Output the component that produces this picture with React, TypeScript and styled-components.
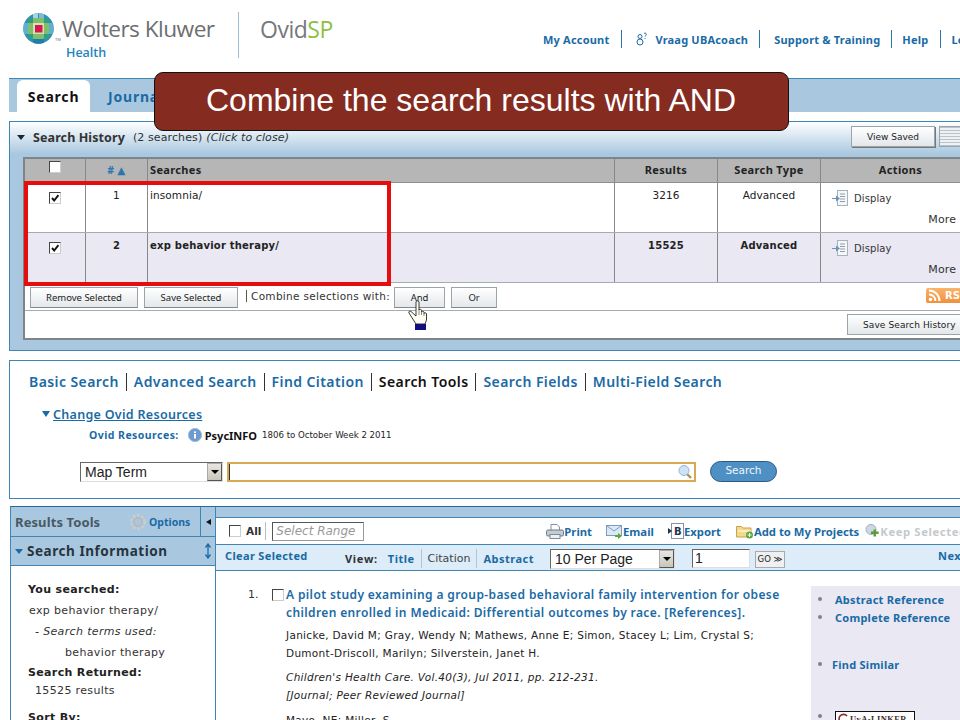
import React from 'react';
import styled, { createGlobalStyle } from 'styled-components';

const boldFont = `"Noto Sans", "DejaVu Sans", sans-serif`;

const Global = createGlobalStyle`
  html, body { margin: 0; padding: 0; background: #fff; }
  body { width: 960px; height: 720px; overflow: hidden; font-family: "DejaVu Sans", Verdana, sans-serif; color: #222; }
  * { box-sizing: border-box; }
`;

const Frame = styled.div`
  position: relative;
  width: 960px;
  height: 720px;
  overflow: hidden;
  background: #fff;
`;
const Canvas = styled.div`
  width: 1060px;
  padding-left: 9px;
`;

const Header = styled.header`
  height: 78px;
  margin-left: -9px;
  display: flex;
  align-items: flex-start;
`;
const Brand = styled.div`
  width: 238px;
  padding: 13px 0 0 23px;
  height: 62px;
`;
const BrandTop = styled.div`
  display: flex;
  align-items: center;
`;
const TradeMark = styled.span`
  font: 4px "Liberation Sans", sans-serif;
  color: #6d6e71;
  align-self: flex-end;
  margin: 0 1px 2px 1px;
  width: 6px;
`;
const BrandName = styled.span`
  font-family: "Open Sans", "Liberation Sans", sans-serif;
  font-size: 22.7px;
  letter-spacing: -0.55px;
  color: #6d6e71;
  line-height: 30px;
`;
const BrandSub = styled.div`
  font-family: "Open Sans", sans-serif;
  font-size: 12.5px;
  font-weight: 600;
  color: #1f84bd;
  margin: 1px 0 0 43px;
  line-height: 16px;
`;
const BrandRule = styled.div`
  width: 1px;
  height: 46px;
  margin-top: 12px;
  background: #9dbcd2;
`;
const Product = styled.div`
  font-family: "Open Sans", sans-serif;
  font-size: 23px;
  letter-spacing: -0.5px;
  color: #77787b;
  margin: 12px 0 0 21px;
  line-height: 34px;
  width: 283px;
`;
const ProductAccent = styled.span`
  color: #8dbf3f;
`;
const TopNav = styled.nav`
  display: flex;
  align-items: center;
  height: 18px;
  margin-top: 30px;
  white-space: nowrap;
`;
const TopLink = styled.a<{ $l: number; $r: number }>`
  font-family: ${boldFont};
  font-size: 11px;
  font-weight: 700;
  letter-spacing: 0.2px;
  color: #1a6aa5;
  padding: 0 ${p => p.$r}px 0 ${p => p.$l}px;
  display: flex;
  align-items: center;
  gap: 7px;
  height: 18px;
  & + & { border-left: 1px solid #2b76ad; }
`;

const TabStrip = styled.div`
  height: 34px;
  border-top: 1px solid #3f85b5;
  background: #a9c8e0;
  display: flex;
  align-items: flex-end;
  padding-left: 8px;
`;
const Tab = styled.div<{ $active?: boolean }>`
  height: 32px;
  width: ${p => (p.$active ? 73 : 90)}px;
  border-radius: 6px 6px 0 0;
  background: ${p => (p.$active ? '#fff' : 'transparent')};
  color: ${p => (p.$active ? '#111' : '#1a6aa5')};
  font-family: ${boldFont};
  font-size: 14px;
  font-weight: 700;
  letter-spacing: 0.8px;
  display: flex;
  align-items: center;
  justify-content: ${p => (p.$active ? 'center' : 'flex-start')};
  padding: ${p => (p.$active ? '0' : '0 0 0 18px')};
`;

const HistoryPanel = styled.section`
  margin-top: 9px;
  height: 230px;
  border: 1px solid #3f85b5;
  border-width: 1px 0 1px 1px;
  background: linear-gradient(#fff 0, #a9c8e0 32px);
`;
const HistoryTitle = styled.div`
  height: 35px;
  display: flex;
  align-items: center;
  font-size: 12px;
  color: #333;
  width: 970px;
  padding: 0 0 5px 7px;
`;
const Caret = styled.span<{ $gap: number; $color: string }>`
  width: 0;
  height: 0;
  border: 4px solid transparent;
  border-top: 5px solid ${p => p.$color};
  border-bottom: 0;
  margin-right: ${p => p.$gap}px;
`;
const HistoryName = styled.strong`
  font-family: ${boldFont};
  font-weight: 700;
  font-size: 12.5px;
  letter-spacing: 0.1px;
  margin-right: 8px;
`;
const Muted = styled.span`
  font-size: 11px;
  letter-spacing: 0.1px;
`;
const Slanted = styled.span`
  font-size: 11px;
  font-style: italic;
  letter-spacing: 0.1px;
  margin-left: 4px;
`;
const ViewSaved = styled.button`
  margin-left: auto;
  align-self: flex-start;
  margin-top: 4px;
  width: 84px;
  height: 21px;
  margin-right: 4px;
  border: 1px solid #9aa4aa;
  background: linear-gradient(#fff, #e2e7ea);
  box-shadow: 1px 1px 0 #777;
  font: 9px "DejaVu Sans", sans-serif;
  color: #222;
  padding: 0;
`;
const ListIcon = styled.span`
  width: 41px;
  height: 21px;
  flex: none;
  align-self: flex-start;
  margin-top: 4px;
  border: 1px solid #9aa4aa;
  background: repeating-linear-gradient(#b8c2c9 0 1px, #eef2f4 1px 3px);
`;

const HistoryBox = styled.div`
  margin-left: 13px;
  border: 1px solid #7d8589;
  border-width: 2px 0 2px 2px;
  background: #fff;
  height: 183px;
`;
const columns = '60px 62px 467px 103px 103px 160px';
const HeadRow = styled.div`
  display: grid;
  grid-template-columns: ${columns};
  height: 24px;
  background: #b6b6b6;
  border-bottom: 1px solid #8b9094;
`;
const HeadCell = styled.div<{ $left?: boolean }>`
  font-family: ${boldFont};
  font-size: 11px;
  font-weight: 700;
  color: #222;
  display: flex;
  align-items: center;
  justify-content: ${p => (p.$left ? 'flex-start' : 'center')};
  padding: 0 0 2px ${p => (p.$left ? '2px' : '0')};
  letter-spacing: 0.35px;
  border-left: 1px solid #85898c;
  &:first-child { border-left: 0; }
`;
const SortLabel = styled.span`
  color: #2a77ad;
  font-size: 10.5px;
  display: flex;
  gap: 3px;
`;
const Row = styled.div<{ $shade?: boolean }>`
  display: grid;
  grid-template-columns: ${columns};
  height: 50px;
  background: ${p => (p.$shade ? '#e9e8f3' : '#fff')};
  border-bottom: 1px solid #a7abae;
`;
const Cell = styled.div<{ $left?: boolean; $bold?: boolean }>`
  font-size: ${p => (p.$bold ? 10 : 10.5)}px;
  font-weight: ${p => (p.$bold ? 700 : 400)};
  letter-spacing: ${p => (p.$bold ? 0.22 : 0.1)}px;
  color: #222;
  text-align: ${p => (p.$left ? 'left' : 'center')};
  padding: ${p => (p.$bold ? 7 : 6)}px ${p => (p.$left ? '2px' : '0')} 0;
  border-left: 1px solid #85898c;
  &:first-child { border-left: 0; }
`;
const ActionCell = styled.div`
  border-left: 1px solid #85898c;
  font-size: 10px;
  letter-spacing: 0.1px;
  color: #333;
  padding: 7px 0 0 11px;
`;
const DisplayLine = styled.div`
  display: flex;
  align-items: center;
  gap: 6px;
`;
const MoreLine = styled.div`
  text-align: right;
  width: 124px;
  margin-top: 7px;
  line-height: 13px;
  font-size: 11px;
`;
const CheckBox = styled.span<{ $top?: number }>`
  display: inline-block;
  width: 12px;
  height: 12px;
  border: 1px solid #444;
  border-right-color: #ccc;
  border-bottom-color: #ccc;
  background: #fff;
  position: relative;
  margin-top: ${p => p.$top ?? 0}px;
  vertical-align: top;
  flex: none;
`;
const Tick = styled.svg`
  position: absolute;
  left: 0;
  top: 0;
  width: 10px;
  height: 10px;
`;
const CheckCell = styled.div`
  text-align: center;
  padding-top: 9px;
`;
const Toolbar = styled.div`
  height: 28px;
  display: flex;
  align-items: center;
  padding: 1px 0 0 5px;
  border-bottom: 1px solid #a7abae;
  position: relative;
`;
const ToolButton = styled.button<{ $w: number; $gap?: number }>`
  width: ${p => p.$w}px;
  margin-right: ${p => p.$gap ?? 6}px;
  height: 21px;
  border: 1px solid #9aa4aa;
  border-bottom-color: #7f898f;
  background: linear-gradient(#fff, #e4e8ea);
  font: 9.5px "Noto Sans", "DejaVu Sans", sans-serif;
  color: #222;
  padding: 0;
`;
const CombineText = styled.span`
  font-size: 10.5px;
  letter-spacing: 0.3px;
  color: #333;
  margin-left: 2px;
  border-left: 1px solid #555;
  padding-left: 4px;
  margin-right: 4px;
  line-height: 12px;
  white-space: nowrap;
  position: relative;
  top: -1px;
`;
const Rss = styled.span`
  position: absolute;
  left: 901px;
  top: 5px;
  width: 60px;
  height: 15px;
  background: linear-gradient(#fbb36a, #f0903a);
  border-radius: 2px;
  display: flex;
  align-items: center;
  gap: 4px;
  padding-left: 2px;
  color: #fff;
  font-size: 10px;
  font-weight: 700;
`;
const SaveRow = styled.div`
  height: 27px;
  display: flex;
  justify-content: flex-end;
  align-items: center;
  width: 942px;
`;
const SaveButton = styled.button`
  width: 120px;
  height: 21px;
  border: 1px solid #9aa4aa;
  background: linear-gradient(#fff, #e2e7ea);
  font: 9px "DejaVu Sans", sans-serif;
  letter-spacing: 0.1px;
  color: #222;
  padding: 0 0 0 15px;
  text-align: left;
  white-space: nowrap;
`;

const SearchPanel = styled.section`
  margin-top: 9px;
  height: 139px;
  border: 1px solid #3f85b5;
  border-right: 0;
  padding: 11px 0 0 19px;
`;
const ModeNav = styled.nav`
  display: flex;
  align-items: center;
  height: 20px;
`;
const ModeLink = styled.a<{ $active?: boolean }>`
  font-family: ${boldFont};
  font-size: 14px;
  font-weight: 600;
  letter-spacing: 0.42px;
  color: ${p => (p.$active ? '#111' : '#1a6aa5')};
  padding: 0 7px;
  line-height: 18px;
  &:first-child { padding-left: 0; }
  & + & { border-left: 1px solid #333; }
`;
const ChangeLine = styled.div`
  display: flex;
  align-items: center;
  height: 16px;
  margin: 14px 0 0 13px;
`;
const SmallCaret = styled.span`
  width: 0;
  height: 0;
  border: 4px solid transparent;
  border-top: 6px solid #1a6aa5;
  border-bottom: 0;
  margin-right: 3px;
`;
const ChangeLink = styled.a`
  font-family: ${boldFont};
  font-size: 12.5px;
  font-weight: 600;
  letter-spacing: 0.3px;
  color: #1a6aa5;
  text-decoration: underline;
`;
const ResourceLine = styled.div`
  display: flex;
  align-items: center;
  height: 18px;
  margin: 4px 0 0 60px;
`;
const ResourceLabel = styled.span`
  font-family: ${boldFont};
  font-size: 10.5px;
  font-weight: 700;
  letter-spacing: 0.45px;
  color: #1a6aa5;
  margin-right: 9px;
`;
const ResourceName = styled.strong`
  font-family: ${boldFont};
  font-size: 11px;
  font-weight: 700;
  color: #111;
  margin: 0 5px 0 3px;
`;
const ResourceDate = styled.span`
  font-size: 8.6px;
  color: #222;
`;
const SearchLine = styled.div`
  display: flex;
  align-items: center;
  height: 22px;
  margin: 17px 0 0 51px;
`;
const FakeSelect = styled.div<{ $w: number; $gap?: number }>`
  width: ${p => p.$w}px;
  height: 20px;
  margin-left: ${p => p.$gap ?? 0}px;
  border: 1px solid #666;
  border-right-color: #ddd;
  border-bottom-color: #ddd;
  display: flex;
  align-items: center;
  justify-content: space-between;
  background: #fff;
  font: 14px "Liberation Sans", sans-serif;
  padding-left: 4px;
  color: #222;
  flex: none;
`;
const SelectArrow = styled.span`
  width: 15px;
  height: 18px;
  background: linear-gradient(#e8e6e0, #c8c5bc);
  border: 1px solid #aaa;
  border-right-color: #555;
  border-bottom-color: #555;
  display: flex;
  align-items: center;
  justify-content: center;
  &::after {
    content: '';
    border: 4px solid transparent;
    border-top: 4px solid #000;
    border-bottom: 0;
  }
`;
const QueryBox = styled.div`
  width: 469px;
  height: 20px;
  margin-left: 4px;
  border: 2px solid #d8a955;
  background: #fff;
  display: flex;
  align-items: center;
  justify-content: flex-end;
  padding-right: 1px;
  position: relative;
  flex: none;
  &::before {
    content: '';
    position: absolute;
    left: 0;
    top: 0;
    width: 1px;
    height: 16px;
    background: #333;
  }
`;
const SearchButton = styled.button`
  margin: 0 0 1px 14px;
  width: 67px;
  height: 21px;
  border-radius: 11px;
  border: 1px solid #2a5a85;
  background: #4f90c4;
  color: #eef5fb;
  font: 10.5px "DejaVu Sans", sans-serif;
  padding: 0 0 3px;
`;

const ResultsPanel = styled.section`
  margin-top: 7px;
  margin-left: 1px;
  display: grid;
  grid-template-columns: 205px 1fr;
  height: 220px;
  border-top: 1px solid #1f6aa0;
  border-left: 1px solid #3f85b5;
`;
const SideBar = styled.aside`
  border-right: 1px solid #3f85b5;
`;
const SideHead = styled.div`
  height: 30px;
  background: #a9c8e0;
  border-bottom: 1px solid #3f85b5;
  display: flex;
  align-items: center;
  padding-left: 4px;
`;
const SideTitle = styled.span`
  font-family: ${boldFont};
  font-size: 13px;
  font-weight: 700;
  color: #4a5963;
  letter-spacing: 0.1px;
  width: 113px;
`;
const SideOptions = styled.span`
  font-family: ${boldFont};
  font-size: 10.5px;
  font-weight: 700;
  color: #1a6aa5;
  display: flex;
  align-items: center;
  gap: 1px;
  width: 72px;
`;
const CollapseTab = styled.span`
  height: 29px;
  flex: 1;
  border-left: 1px solid #3f85b5;
  display: flex;
  align-items: center;
  justify-content: center;
  &::after {
    content: '';
    border: 3px solid transparent;
    border-right: 5px solid #111;
    border-left: 0;
  }
`;
const InfoHead = styled.div`
  height: 29px;
  background: #a9c8e0;
  border-bottom: 1px solid #3f85b5;
  display: flex;
  align-items: center;
  padding-left: 4px;
  font-family: ${boldFont};
  font-size: 13.5px;
  font-weight: 700;
  color: #26343e;
  letter-spacing: 0.55px;
`;
const ResizeMark = styled.svg`
  margin-left: auto;
  margin-right: 3px;
`;
const SideBody = styled.div`
  padding: 17px 0 0 17px;
`;
const SideLabel = styled.div<{ $top?: number }>`
  font-size: 11px;
  font-weight: 700;
  letter-spacing: 0.35px;
  color: #222;
  line-height: 14px;
  margin-top: ${p => p.$top ?? 0}px;
`;
const SideText = styled.div<{ $indent?: number; $italic?: boolean; $top?: number }>`
  font-size: 11px;
  letter-spacing: 0.35px;
  color: #333;
  line-height: 14px;
  font-style: ${p => (p.$italic ? 'italic' : 'normal')};
  margin-top: ${p => p.$top ?? 7}px;
  padding-left: ${p => p.$indent ?? 0}px;
`;

const Main = styled.div``;
const MainBand = styled.div`
  height: 11px;
  background: #a9c8e0;
  border-bottom: 1px solid #3f85b5;
`;
const ActionBar = styled.div`
  height: 26px;
  display: flex;
  align-items: center;
  padding-left: 13px;
  white-space: nowrap;
`;
const AllLabel = styled.span`
  font-size: 10.5px;
  font-weight: 700;
  color: #333;
  margin-left: 5px;
  padding-right: 4px;
  border-right: 1px solid #bbb;
  line-height: 18px;
`;
const RangeBox = styled.span`
  width: 92px;
  height: 19px;
  margin-left: 6px;
  border: 1px solid #999;
  border-top-color: #555;
  border-left-color: #555;
  font: italic 12px "DejaVu Sans", sans-serif;
  color: #999;
  padding-left: 3px;
  line-height: 17px;
  overflow: hidden;
  flex: none;
`;
const ActionLink = styled.a<{ $gap: number; $off?: boolean }>`
  display: flex;
  align-items: center;
  font-family: ${boldFont};
  font-size: 11.3px;
  font-weight: 700;
  letter-spacing: ${p => (p.$off ? '0.6px' : '0')};
  color: ${p => (p.$off ? '#c4c9cc' : '#1a6aa5')};
  margin-left: ${p => p.$gap}px;
`;
const ViewBar = styled.div`
  height: 27px;
  background: #dcecf8;
  border-top: 1px solid #3f85b5;
  border-bottom: 1px solid #3f85b5;
  display: flex;
  align-items: center;
  padding: 2px 0 0 9px;
  white-space: nowrap;
`;
const ClearLink = styled.a`
  font-family: ${boldFont};
  font-size: 11px;
  font-weight: 700;
  letter-spacing: 0.35px;
  color: #1a6aa5;
  width: 120px;
  position: relative;
  top: -3px;
`;
const ViewLabel = styled.span`
  font-family: ${boldFont};
  font-size: 11px;
  font-weight: 700;
  letter-spacing: 0.7px;
  color: #333;
  margin-right: 10px;
`;
const ViewLink = styled.a<{ $plain?: boolean; $last?: boolean }>`
  font-family: ${p => (p.$plain ? `"DejaVu Sans", sans-serif` : boldFont)};
  font-size: 11px;
  font-weight: ${p => (p.$plain ? 400 : 700)};
  letter-spacing: ${p => (p.$plain ? 0 : 0.5)}px;
  color: ${p => (p.$plain ? '#444' : '#1a6aa5')};
  padding-right: 6px;
  margin-right: 6px;
  border-right: ${p => (p.$last ? '0' : '1px solid #b6c4ce')};
  line-height: 19px;
`;
const PageBox = styled.span`
  width: 58px;
  height: 19px;
  margin-left: 17px;
  border: 1px solid #666;
  border-right-color: #ddd;
  border-bottom-color: #ddd;
  background: #fff;
  font: 14px "Liberation Sans", sans-serif;
  padding-left: 2px;
  line-height: 17px;
`;
const GoBox = styled.span`
  width: 30px;
  height: 17px;
  margin: 2px 0 0 5px;
  border: 1px solid #aaa;
  background: #eef0f2;
  font-size: 8.5px;
  line-height: 15px;
  text-align: center;
  color: #222;
`;
const NextLink = styled.a`
  font-family: ${boldFont};
  font-size: 11px;
  font-weight: 700;
  color: #1a6aa5;
  letter-spacing: 0.5px;
  margin-left: 153px;
  position: relative;
  top: -3px;
`;
const ResultBody = styled.div`
  display: flex;
  align-items: flex-start;
`;
const Article = styled.article`
  width: 595px;
  padding: 15px 0 0 32px;
  display: grid;
  grid-template-columns: 24px 14px 1fr;
`;
const ArticleNum = styled.span`
  font-size: 11px;
  color: #333;
  line-height: 18px;
`;
const ArticleCheck = styled.span`
  padding-top: 3px;
`;
const ArticleTitle = styled.a`
  font-family: ${boldFont};
  font-size: 12px;
  font-weight: 600;
  letter-spacing: 0.38px;
  color: #1a6aa5;
  line-height: 18px;
  white-space: nowrap;
`;
const ArticleText = styled.div<{ $italic?: boolean; $top: number }>`
  grid-column: 3;
  font-size: 10.5px;
  letter-spacing: 0.3px;
  color: #222;
  line-height: 18px;
  font-style: ${p => (p.$italic ? 'italic' : 'normal')};
  white-space: nowrap;
  margin-top: ${p => p.$top}px;
`;
const LinkCard = styled.ul`
  list-style: none;
  margin: 15px 0 0 0;
  padding: 4px 0 0 7px;
  width: 200px;
  height: 150px;
  background: #e9e8f3;
`;
const LinkItem = styled.li<{ $top?: number; $indent?: number }>`
  display: flex;
  align-items: center;
  height: 18px;
  margin-top: ${p => p.$top ?? 0}px;
  font-family: ${boldFont};
  font-size: 11px;
  font-weight: 700;
  letter-spacing: 0.25px;
  color: #1a6aa5;
  &::before {
    content: '';
    width: 4px;
    height: 4px;
    border-radius: 50%;
    background: #7d8489;
    margin-right: ${p => p.$indent ?? 13}px;
  }
`;
const LinkerBadge = styled.span`
  display: flex;
  align-items: center;
  gap: 1px;
  width: 80px;
  height: 16px;
  margin-top: 6px;
  border: 1px solid #111;
  font: 700 8.5px "Liberation Serif", serif;
  letter-spacing: 0.4px;
  background: #fff;
  color: #3b2a2a;
  padding-left: 1px;
`;

const Banner = styled.div`
  position: absolute;
  left: 154px;
  top: 72px;
  width: 635px;
  height: 59px;
  border-radius: 9px;
  border: 1px solid #111;
  background: #852b20;
  color: #fff;
  font: 32px "Liberation Sans", Arial, sans-serif;
  display: flex;
  align-items: center;
  justify-content: center;
  padding: 0 1px 2px 0;
`;
const Highlight = styled.div`
  position: absolute;
  left: 24px;
  top: 181px;
  width: 367px;
  height: 105px;
  border: 4px solid #e60d0d;
`;
const Hand = styled.svg`
  position: absolute;
  left: 407px;
  top: 300px;
`;

const Check = ({ on, top }: { on?: boolean; top?: number }) => (
  <CheckBox $top={top}>
    {on && (
      <Tick viewBox="0 0 10 10">
        <path d="M2 5 L4.2 7.5 L8.4 2.2" fill="none" stroke="#111" strokeWidth="1.9" />
      </Tick>
    )}
  </CheckBox>
);

const Globe = () => (
  <svg width="31" height="31" viewBox="0 0 31 31">
    <defs>
      <clipPath id="globeClip"><circle cx="15.5" cy="15.5" r="15.2" /></clipPath>
    </defs>
    <g clipPath="url(#globeClip)">
      <rect width="31" height="31" fill="#2f8fb6" />
      <rect x="10" y="0" width="5" height="5" fill="#a9d3e3" />
      <rect x="16" y="0" width="5" height="5" fill="#7fbcd4" />
      <rect x="0" y="10" width="5" height="11" fill="#5fb0cd" />
      <rect x="26" y="10" width="5" height="11" fill="#5fb0cd" />
      <rect x="10" y="26" width="11" height="5" fill="#1f7fa8" />
      <rect x="5" y="5" width="21" height="21" fill="#7fbf6a" />
      <rect x="5" y="5" width="5" height="5" fill="#2f9d8c" />
      <rect x="21" y="5" width="5" height="5" fill="#2f9d8c" />
      <rect x="5" y="21" width="5" height="5" fill="#2f9d8c" />
      <rect x="21" y="21" width="5" height="5" fill="#2f9d8c" />
      <rect x="10" y="10" width="11" height="11" fill="#cfe6b4" />
      <rect x="12" y="12" width="7.5" height="7.5" fill="#d8174f" />
    </g>
  </svg>
);

const DisplayIcon = () => (
  <svg width="16" height="16" viewBox="0 0 16 16">
    <rect x="5.5" y="0.5" width="10" height="15" fill="#f4f6f8" stroke="#a5b3bd" />
    <path d="M8 4h5M8 6.5h5M8 9h5M8 11.5h5" stroke="#8fa0ac" />
    <path d="M0 8h4V5.5L8 8.5 4 11.5V9H0z" fill="#6d93b3" />
  </svg>
);

const Coach = () => (
  <svg width="12" height="14" viewBox="0 0 12 14" fill="none" stroke="#1a6aa5" strokeWidth="1">
    <circle cx="4" cy="4.5" r="2" />
    <circle cx="4" cy="10" r="3" />
    <path d="M8 1.5c1-.8 2.5-.3 2.3 1 -.1.8-1.2 1-1.2 2M9 6v.8" />
  </svg>
);

const InfoIcon = () => (
  <svg width="14" height="14" viewBox="0 0 14 14">
    <circle cx="7" cy="7" r="6.6" fill="#6c9bd0" stroke="#9fbbdc" />
    <rect x="6" y="6" width="2" height="4.5" fill="#fff" />
    <rect x="6" y="3.4" width="2" height="1.6" fill="#fff" />
  </svg>
);

const Magnifier = () => (
  <svg width="15" height="16" viewBox="0 0 15 16">
    <path d="M9 10l4 4" stroke="#b89048" strokeWidth="2.4" />
    <circle cx="6" cy="6.5" r="5" fill="#cfe3f5" stroke="#93b4d4" />
  </svg>
);

const Gear = () => (
  <svg width="20" height="20" viewBox="0 0 20 20">
    <circle cx="10" cy="10" r="6" fill="none" stroke="#c8cdd0" strokeWidth="4" strokeDasharray="2.4 1.4" />
    <circle cx="10" cy="10" r="4.2" fill="none" stroke="#b4babe" strokeWidth="2" />
  </svg>
);

const Printer = () => (
  <svg width="18" height="17" viewBox="0 0 18 17">
    <path d="M5 7V1.5h6l2.5 2.5v3" fill="#fff" stroke="#7f93a6" />
    <rect x="0.5" y="7" width="17" height="6" rx="1.5" fill="#c3ccd3" stroke="#6c7a86" />
    <rect x="4" y="11.5" width="10" height="4" fill="#eef1f3" stroke="#7f8c96" />
  </svg>
);
const Mail = () => (
  <svg width="17" height="16" viewBox="0 0 17 16">
    <rect x="0.5" y="2.5" width="15" height="10" fill="#dbe9f6" stroke="#7d9dbe" />
    <path d="M1 3l7 5 7-5" fill="none" stroke="#7d9dbe" />
    <path d="M9 12h3v-2l4 3-4 3v-2H9z" fill="#5aa83c" />
  </svg>
);
const ExportIcon = () => (
  <svg width="16" height="16" viewBox="0 0 16 16">
    <rect x="3.5" y="0.5" width="12" height="15" fill="#fff" stroke="#8a939a" />
    <path d="M0 5l4 3-4 3z" fill="#1d3550" />
    <text x="6" y="12" fontSize="10" fontWeight="700" fontFamily="DejaVu Sans" fill="#1d3550">B</text>
  </svg>
);
const Folder = () => (
  <svg width="18" height="16" viewBox="0 0 18 16">
    <path d="M0.5 3.5h5l1.5 1.5h8v9h-14.5z" fill="#f4d98b" stroke="#c9a24e" />
    <path d="M2 8h13" stroke="#fff" />
    <circle cx="13.5" cy="12" r="3.5" fill="#5aa83c" />
    <path d="M11.5 12h4M13.5 10v4" stroke="#fff" />
  </svg>
);
const KeepIcon = () => (
  <svg width="15" height="16" viewBox="0 0 15 16">
    <circle cx="6" cy="6.5" r="5" fill="#cbd9e4" stroke="#9db0bf" />
    <path d="M6 9h3V6.5h3V9h3v3h-3v3H9v-3H6z" transform="scale(0.85) translate(1 1)" fill="#5f9a3f" />
  </svg>
);
const RssGlyph = () => (
  <svg width="13" height="13" viewBox="0 0 13 13">
    <circle cx="2.5" cy="10.5" r="1.8" fill="#fff" />
    <path d="M1 5.5a6.5 6.5 0 0 1 6.5 6.5M1 1.5a10.5 10.5 0 0 1 10.5 10.5" fill="none" stroke="#fff" strokeWidth="2" />
  </svg>
);

export default function App() {
  return (
    <Frame>
      <Global />
      <Canvas>
        <Header>
          <Brand>
            <BrandTop>
              <Globe />
              <TradeMark>TM</TradeMark>
              <BrandName>Wolters Kluwer</BrandName>
            </BrandTop>
            <BrandSub>Health</BrandSub>
          </Brand>
          <BrandRule />
          <Product>Ovid<ProductAccent>SP</ProductAccent></Product>
          <TopNav>
            <TopLink $l={0} $r={12}>My Account</TopLink>
            <TopLink $l={14} $r={11}><Coach />Vraag UBAcoach</TopLink>
            <TopLink $l={14} $r={11}>Support &amp; Training</TopLink>
            <TopLink $l={10} $r={12}>Help</TopLink>
            <TopLink $l={10} $r={0}>Logout</TopLink>
          </TopNav>
        </Header>

        <TabStrip>
          <Tab $active>Search</Tab>
          <Tab>Journals</Tab>
        </TabStrip>

        <HistoryPanel>
          <HistoryTitle>
            <Caret $gap={8} $color="#1d2630" />
            <HistoryName>Search History</HistoryName>
            <Muted>(2 searches)</Muted>
            <Slanted>(Click to close)</Slanted>
            <ViewSaved>View Saved</ViewSaved>
            <ListIcon />
          </HistoryTitle>
          <HistoryBox>
            <HeadRow>
              <HeadCell><Check top={-5} /></HeadCell>
              <HeadCell><SortLabel><span>#</span><span>▲</span></SortLabel></HeadCell>
              <HeadCell $left>Searches</HeadCell>
              <HeadCell>Results</HeadCell>
              <HeadCell>Search Type</HeadCell>
              <HeadCell>Actions</HeadCell>
            </HeadRow>
            <Row>
              <CheckCell><Check on /></CheckCell>
              <Cell>1</Cell>
              <Cell $left>insomnia/</Cell>
              <Cell>3216</Cell>
              <Cell>Advanced</Cell>
              <ActionCell>
                <DisplayLine><DisplayIcon />Display</DisplayLine>
                <MoreLine>More</MoreLine>
              </ActionCell>
            </Row>
            <Row $shade>
              <CheckCell><Check on /></CheckCell>
              <Cell $bold>2</Cell>
              <Cell $left $bold>exp behavior therapy/</Cell>
              <Cell $bold>15525</Cell>
              <Cell $bold>Advanced</Cell>
              <ActionCell>
                <DisplayLine><DisplayIcon />Display</DisplayLine>
                <MoreLine>More</MoreLine>
              </ActionCell>
            </Row>
            <Toolbar>
              <ToolButton $w={108}>Remove Selected</ToolButton>
              <ToolButton $w={94}>Save Selected</ToolButton>
              <CombineText>Combine selections with:</CombineText>
              <ToolButton $w={51}>And</ToolButton>
              <ToolButton $w={46}>Or</ToolButton>
              <Rss><RssGlyph />RSS</Rss>
            </Toolbar>
            <SaveRow><SaveButton>Save Search History</SaveButton></SaveRow>
          </HistoryBox>
        </HistoryPanel>

        <SearchPanel>
          <ModeNav>
            <ModeLink>Basic Search</ModeLink>
            <ModeLink>Advanced Search</ModeLink>
            <ModeLink>Find Citation</ModeLink>
            <ModeLink $active>Search Tools</ModeLink>
            <ModeLink>Search Fields</ModeLink>
            <ModeLink>Multi-Field Search</ModeLink>
          </ModeNav>
          <ChangeLine>
            <SmallCaret />
            <ChangeLink>Change Ovid Resources</ChangeLink>
          </ChangeLine>
          <ResourceLine>
            <ResourceLabel>Ovid Resources:</ResourceLabel>
            <InfoIcon />
            <ResourceName>PsycINFO</ResourceName>
            <ResourceDate>1806 to October Week 2 2011</ResourceDate>
          </ResourceLine>
          <SearchLine>
            <FakeSelect $w={143}>Map Term<SelectArrow /></FakeSelect>
            <QueryBox><Magnifier /></QueryBox>
            <SearchButton>Search</SearchButton>
          </SearchLine>
        </SearchPanel>

        <ResultsPanel>
          <SideBar>
            <SideHead>
              <SideTitle>Results Tools</SideTitle>
              <SideOptions><Gear />Options</SideOptions>
              <CollapseTab />
            </SideHead>
            <InfoHead>
              <Caret $gap={4} $color="#1a6aa5" />
              Search Information
              <ResizeMark width="8" height="16" viewBox="0 0 8 16">
                <path d="M4 2v12M1.5 4.5L4 1l2.5 3.5M1.5 11.5L4 15l2.5-3.5" fill="none" stroke="#1a6aa5" strokeWidth="1.3" />
              </ResizeMark>
            </InfoHead>
            <SideBody>
              <SideLabel>You searched:</SideLabel>
              <SideText $indent={1}>exp behavior therapy/</SideText>
              <SideText $indent={7} $italic>- Search terms used:</SideText>
              <SideText $indent={37}>behavior therapy</SideText>
              <SideLabel $top={6}>Search Returned:</SideLabel>
              <SideText $indent={7} $top={4}>15525 results</SideText>
              <SideLabel $top={13}>Sort By:</SideLabel>
            </SideBody>
          </SideBar>
          <Main>
            <MainBand />
            <ActionBar>
              <Check />
              <AllLabel>All</AllLabel>
              <RangeBox>Select Range</RangeBox>
              <ActionLink $gap={182}><Printer />Print</ActionLink>
              <ActionLink $gap={14}><Mail />Email</ActionLink>
              <ActionLink $gap={14}><ExportIcon />Export</ActionLink>
              <ActionLink $gap={15}><Folder />Add to My Projects</ActionLink>
              <ActionLink $gap={6} $off><KeepIcon />Keep Selected</ActionLink>
            </ActionBar>
            <ViewBar>
              <ClearLink>Clear Selected</ClearLink>
              <ViewLabel>View:</ViewLabel>
              <ViewLink>Title</ViewLink>
              <ViewLink $plain>Citation</ViewLink>
              <ViewLink $last>Abstract</ViewLink>
              <FakeSelect $w={125} $gap={4}>10 Per Page<SelectArrow /></FakeSelect>
              <PageBox>1</PageBox>
              <GoBox>GO ≫</GoBox>
              <NextLink>Next</NextLink>
            </ViewBar>
            <ResultBody>
              <Article>
                <ArticleNum>1.</ArticleNum>
                <ArticleCheck><Check /></ArticleCheck>
                <ArticleTitle>
                  A pilot study examining a group-based behavioral family intervention for obese<br />
                  children enrolled in Medicaid: Differential outcomes by race. [References].
                </ArticleTitle>
                <ArticleText $top={4}>
                  Janicke, David M; Gray, Wendy N; Mathews, Anne E; Simon, Stacey L; Lim, Crystal S;<br />
                  Dumont-Driscoll, Marilyn; Silverstein, Janet H.
                </ArticleText>
                <ArticleText $italic $top={6}>
                  Children's Health Care. Vol.40(3), Jul 2011, pp. 212-231.<br />
                  [Journal; Peer Reviewed Journal]
                </ArticleText>
                <ArticleText $top={7}>Mayo, NE; Miller, S</ArticleText>
              </Article>
              <LinkCard>
                <LinkItem>Abstract Reference</LinkItem>
                <LinkItem>Complete Reference</LinkItem>
                <LinkItem $top={29} $indent={10}>Find Similar</LinkItem>
                <LinkItem $top={34}>
                  <LinkerBadge>
                    <svg width="12" height="12" viewBox="0 0 12 12"><path d="M10 3A4.5 4.5 0 1 0 10.5 8H6" fill="none" stroke="#8a2a2a" strokeWidth="1.6" /></svg>
                    UvA-LINKER
                  </LinkerBadge>
                </LinkItem>
              </LinkCard>
            </ResultBody>
          </Main>
        </ResultsPanel>
      </Canvas>

      <Banner>Combine the search results with AND</Banner>
      <Highlight />
      <Hand width="24" height="31" viewBox="0 0 24 31">
        <path d="M9 2c0-1.5 3-1.5 3 0V10c0-1 2.5-1 2.5.5V12c0-1 2.5-1 2.5.5V13.5c0-1 2.5-1 2.5.5V20L18 24H9L2 13c-.8-1.5 1-2.5 2-1.5L9 16z" fill="#fffdf2" stroke="#222" strokeWidth="0.9" />
        <path d="M12 10v5M14.500 11v4M17 13v3" stroke="#555" strokeWidth="0.7" />
        <rect x="8" y="24" width="11" height="6" fill="#10107f" />
      </Hand>
    </Frame>
  );
}
